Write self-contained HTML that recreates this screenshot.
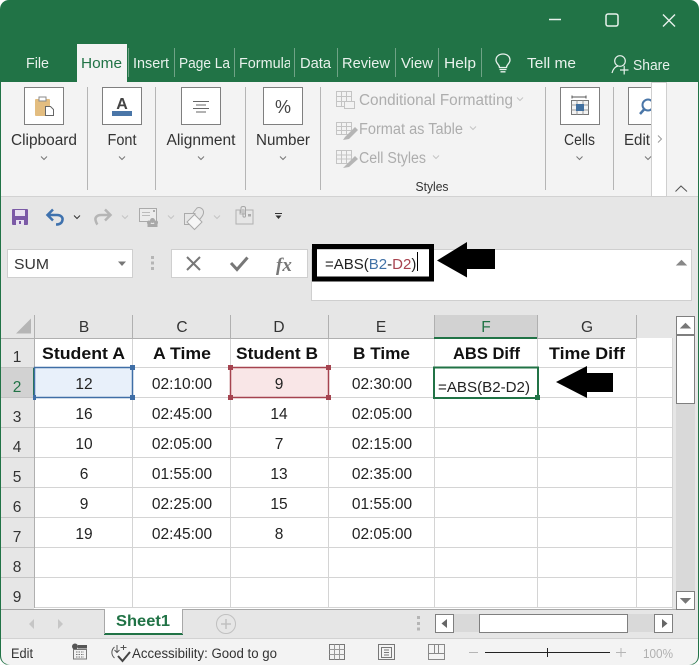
<!DOCTYPE html>
<html><head><meta charset="utf-8"><style>
html,body{margin:0;padding:0;background:#fff;width:700px;height:665px;overflow:hidden}
svg{display:block}
text{font-family:"Liberation Sans",sans-serif;fill:#222}
.t{fill:#e8f1ec;font-size:15px}
.l{font-size:15.5px;fill:#333;text-anchor:middle}
.g{font-size:15.5px;fill:#adadad}
.h{font-size:15.5px;fill:#333;text-anchor:middle}
.b{font-size:16.5px;font-weight:bold;fill:#111;text-anchor:middle}
.c{font-size:15.5px;fill:#222;text-anchor:middle}
.r{font-size:15.5px;fill:#333;text-anchor:middle}
.gl{stroke:#d4d4d4;stroke-width:1;fill:none}
.ln{stroke:#b0b0b0;stroke-width:1;fill:none}
.box{fill:#fff;stroke:#7f7f7f;stroke-width:1}
.car{fill:none;stroke:#777;stroke-width:1}
.gi{fill:none;stroke:#c4c4c4;stroke-width:1}
</style></head><body>
<svg width="700" height="665" viewBox="0 0 700 665" xmlns="http://www.w3.org/2000/svg">
<rect width="700" height="665" fill="#fff"/>
<rect x="0" y="0" width="699" height="665" rx="9" fill="#217346"/>
<rect x="699" y="0" width="1" height="665" fill="#fff"/>

<!-- window controls -->
<path d="M549 19.500H561" stroke="#e8f1ec" stroke-width="1.500"/>
<rect x="606" y="14" width="12" height="12" rx="2" fill="none" stroke="#e8f1ec" stroke-width="1.500"/>
<path d="M663 14.500L675 26.500M675 14.500L663 26.500" stroke="#e8f1ec" stroke-width="1.400"/>

<!-- tabs -->
<rect x="77" y="44" width="50" height="38" fill="#f3f3f3"/>
<text class="t" x="26" y="68" textLength="23" lengthAdjust="spacingAndGlyphs">File</text>
<text x="81" y="68" font-size="15" style="fill:#217346" textLength="41" lengthAdjust="spacingAndGlyphs">Home</text>
<text class="t" x="133" y="68" textLength="36" lengthAdjust="spacingAndGlyphs">Insert</text>
<text class="t" x="179" y="68" textLength="51" lengthAdjust="spacingAndGlyphs">Page La</text>
<svg x="239" y="48" width="51" height="30"><text class="t" x="0" y="20" textLength="60" lengthAdjust="spacingAndGlyphs">Formulas</text></svg>
<text class="t" x="300" y="68" textLength="31" lengthAdjust="spacingAndGlyphs">Data</text>
<text class="t" x="342" y="68" textLength="48" lengthAdjust="spacingAndGlyphs">Review</text>
<text class="t" x="401" y="68" textLength="32" lengthAdjust="spacingAndGlyphs">View</text>
<text class="t" x="444" y="68" textLength="32" lengthAdjust="spacingAndGlyphs">Help</text>
<text class="t" x="527" y="68" textLength="49" lengthAdjust="spacingAndGlyphs">Tell me</text>
<text class="t" x="633" y="70" textLength="37" lengthAdjust="spacingAndGlyphs">Share</text>
<path d="M128.500 48V77M174.500 48V77M234.500 48V77M294.500 48V77M337.500 48V77M395.500 48V77M438.500 48V77M481.500 48V77" stroke="#6fa386" stroke-width="1"/>
<!-- bulb -->
<path d="M499.500 67.500C499.500 64.500 496 63.500 496 60C496 56.500 499 54 503 54C507 54 510 56.500 510 60C510 63.500 506.500 64.500 506.500 67.500Z" fill="none" stroke="#e8f1ec" stroke-width="1.300"/>
<path d="M499.500 69.500H506.500M500.500 71.800H505.500" stroke="#e8f1ec" stroke-width="1.300"/>
<!-- share -->
<circle cx="620" cy="61" r="5.300" fill="none" stroke="#e8f1ec" stroke-width="1.200"/>
<path d="M612 73C613 69 615.500 66.500 618 66M620 70H628.500M624.200 65.800V74.500" fill="none" stroke="#e8f1ec" stroke-width="1.200"/>

<!-- ribbon -->
<rect x="1" y="82" width="697" height="114" fill="#f3f3f3"/>
<rect x="1" y="197" width="697" height="441" fill="#e6e6e6"/>
<rect x="1" y="196" width="697" height="1" fill="#d2d2d2"/>
<path d="M87.500 87V190M155.500 87V190M245.500 87V190M320.500 87V190M545.500 87V190M613.500 87V190" stroke="#b5b5b5"/>
<rect class="box" x="24.500" y="87.500" width="39" height="37"/>
<rect class="box" x="102.500" y="87.500" width="39" height="37"/>
<rect class="box" x="181.500" y="87.500" width="39" height="37"/>
<rect class="box" x="263.500" y="87.500" width="39" height="37"/>
<rect class="box" x="560.500" y="87.500" width="39" height="37"/>
<rect class="box" x="628.500" y="87.500" width="39" height="37"/>
<!-- clipboard icon -->
<rect x="35" y="99" width="15" height="17" rx="1" fill="#e3bd80"/>
<rect x="39" y="97" width="7" height="4" fill="#fff" stroke="#8a8a8a"/>
<path d="M45.500 106.500H50.500L53.500 109.500V115.500H45.500Z" fill="#fff" stroke="#666"/>
<!-- Font icon -->
<rect x="112" y="111" width="20" height="5" fill="#4a76a8"/>
<text x="122" y="109" text-anchor="middle" font-size="16" font-weight="bold" style="fill:#444">A</text>
<!-- Align -->
<path d="M193 101.500H209M196 105H206M193 108.500H209M196 112H206" stroke="#666" stroke-width="1"/>
<!-- Percent -->
<text x="283" y="113" text-anchor="middle" font-size="18" style="fill:#444">%</text>
<!-- Cells icon -->
<path d="M572 97H586M572 95.500V98.500M586 95.500V98.500" stroke="#555"/>
<rect x="571.500" y="100.500" width="17" height="14" fill="#f3f3f3" stroke="#777"/>
<path d="M577 100.500V114.500M583 100.500V114.500M571.500 105H588.500M571.500 110H588.500" stroke="#999"/>
<rect x="576" y="104" width="8" height="7" fill="#42709f"/>
<!-- Edit icon -->
<circle cx="648" cy="105" r="5.500" fill="none" stroke="#4a76a8" stroke-width="2"/>
<path d="M644 109.500L640 114" stroke="#4a76a8" stroke-width="2.500"/>
<rect x="652" y="83" width="46" height="113" fill="#f3f3f3"/>
<rect x="651.500" y="82.500" width="15" height="114" fill="#fff" stroke="#cfcfcf"/>
<path d="M658 135.500L661.500 139L658 142.500" class="car" style="stroke:#999"/>
<path d="M675.500 191.500L681 186L687 191.500" class="car" style="stroke:#555"/>

<text class="l" x="44" y="145" textLength="66" lengthAdjust="spacingAndGlyphs">Clipboard</text>
<text class="l" x="122" y="145" textLength="29" lengthAdjust="spacingAndGlyphs">Font</text>
<text class="l" x="201" y="145" textLength="69" lengthAdjust="spacingAndGlyphs">Alignment</text>
<text class="l" x="283" y="145" textLength="54" lengthAdjust="spacingAndGlyphs">Number</text>
<text class="l" x="579.500" y="145" textLength="31" lengthAdjust="spacingAndGlyphs">Cells</text>
<text class="l" x="637" y="145" textLength="26" lengthAdjust="spacingAndGlyphs">Edit</text>
<path class="car" d="M41 156.500L44 159.500L47 156.500M119 156.500L122 159.500L125 156.500M198 156.500L201 159.500L204 156.500M280 156.500L283 159.500L286 156.500M576.500 156.500L579.500 159.500L582.500 156.500M645 156.500L648 159.500L651 156.500"/>

<!-- styles group -->
<text class="g" x="359" y="105" textLength="154" lengthAdjust="spacingAndGlyphs">Conditional Formatting</text>
<text class="g" x="359" y="134" textLength="104" lengthAdjust="spacingAndGlyphs">Format as Table</text>
<text class="g" x="359" y="163" textLength="67" lengthAdjust="spacingAndGlyphs">Cell Styles</text>
<path class="gi" d="M517 97.500L520 100.500L523 97.500M470 126.500L473 129.500L476 126.500M433 155.500L436 158.500L439 155.500"/>
<g class="gi">
<rect x="336.500" y="91.500" width="15" height="15"/><path d="M341.500 91.500V106.500M346.500 91.500V106.500M336.500 96.500H351.500M336.500 101.500H351.500"/>
<rect x="344.500" y="101.500" width="10" height="7" fill="#f3f3f3"/>
<rect x="336.500" y="122.500" width="15" height="12"/><path d="M341.500 122.500V134.500M346.500 122.500V134.500M336.500 126.500H351.500M336.500 130.500H351.500"/>
<rect x="336.500" y="150.500" width="15" height="13"/><path d="M336.500 155H351.500M336.500 159H351.500M341.500 150.500V163.500M346.500 150.500V163.500"/>
</g>
<path d="M345 137L355 127L358 130L349 139L343 140Z" fill="#b5b5b5"/>
<path d="M345 166L355 156L358 159L349 167L343 168Z" fill="#b5b5b5"/>
<text x="432" y="191" text-anchor="middle" font-size="13" textLength="33" lengthAdjust="spacingAndGlyphs" style="fill:#333">Styles</text>

<!-- QAT -->
<rect x="12" y="209" width="16" height="16" rx="1" fill="#7b5aa6"/>
<rect x="15" y="210" width="10" height="6" fill="#e8e2f0"/>
<rect x="16" y="220" width="8" height="5" fill="#e8e2f0"/>
<rect x="19" y="221" width="2" height="3" fill="#7b5aa6"/>
<path d="M53 209.500L47.500 215L53 220.500M48 215H57C61.500 215 63 218 62.500 220C62 223 59.500 224.500 56 224.500" fill="none" stroke="#3f72ae" stroke-width="2.500"/>
<path d="M74 215.500L77 218.500L80 215.500" class="car" style="stroke:#333"/>
<path d="M105 209.500L110.500 215L105 220.500M110 215H101C96.500 215 95 218 95.500 220C96 222 96.500 223.500 97.500 224.500" fill="none" stroke="#b5b5b5" stroke-width="2.500"/>
<path class="gi" d="M122 215.500L125 218.500L128 215.500M168 215.500L171 218.500L174 215.500M214 215.500L217 218.500L220 215.500"/>
<rect x="139.500" y="208.500" width="17" height="13" fill="#ececec" stroke="#aaa"/>
<path d="M142 212.500H150M142 215.500H150" stroke="#bbb"/>
<rect x="153" y="210" width="2" height="2" fill="#aaa"/>
<circle cx="152.500" cy="220.500" r="2.500" fill="#a8a8a8"/><circle cx="149" cy="222.500" r="2" fill="#a8a8a8"/><circle cx="156" cy="222.500" r="2" fill="#a8a8a8"/>
<rect x="147.500" y="224" width="10" height="3" fill="#a8a8a8"/>
<path d="M184.500 213.500H195V224L189.500 224.500H184.500Z" fill="none" stroke="#aaa"/>
<path d="M193 213L197 208C200 206.500 204 209 203.500 213C203 216 201 218 199 220" fill="none" stroke="#aaa"/>
<path d="M194.500 214.500L202 222L194.500 229.500L187 222Z" fill="#f6f6f6" stroke="#aaa"/>
<path d="M236 210H240V214H245V210H253V224H236Z" fill="none" stroke="#b0b0b0"/>
<path d="M241 213V208C241 206 245.500 206 245.500 208V216C245.500 217.500 243 217.500 243 216V209" fill="none" stroke="#a5a5a5"/>
<rect x="248" y="214" width="3" height="2.500" fill="#aaa"/>
<path d="M275 213.500H282" stroke="#333"/><path d="M275.500 215.500H281.500L278.500 219Z" fill="#333"/>

<!-- Formula bar -->
<rect x="7.500" y="249.500" width="125" height="28" fill="#fff" stroke="#cfcfcf"/>
<text x="14" y="269" font-size="15" textLength="35" lengthAdjust="spacingAndGlyphs" style="fill:#333">SUM</text>
<path d="M118 261.500H126L122 266Z" fill="#777"/>
<path d="M151 256H154V259H151ZM151 261.500H154V264.500H151ZM151 267H154V270H151Z" fill="#b5b5b5"/>
<rect x="171.500" y="249.500" width="136" height="28" fill="#fff" stroke="#cfcfcf"/>
<path d="M187 257L200 270M200 257L187 270" stroke="#777" stroke-width="2"/>
<path d="M231 263L237 269.500L247.500 257.500" fill="none" stroke="#777" stroke-width="3"/>
<text x="276" y="271" font-size="19" font-style="italic" font-weight="bold" style="font-family:'Liberation Serif',serif;fill:#777">fx</text>
<rect x="311.500" y="249.500" width="380" height="51" fill="#fff" stroke="#cfcfcf"/>
<rect x="314.500" y="246.500" width="117" height="32.500" fill="none" stroke="#000" stroke-width="5"/>
<text x="325" y="269" font-size="15" style="fill:#222">=ABS(<tspan style="fill:#4272a6">B2</tspan>-<tspan style="fill:#a8434f">D2</tspan>)</text>
<rect x="417" y="252" width="1" height="19" fill="#000"/>
<path d="M437 260.500L467 242V249H495V269H467V277.500Z" fill="#000"/>
<path d="M677 265L681.500 260.500L686 265Z" fill="#888" stroke="#888"/>

<!-- grid -->
<rect x="34" y="338" width="638" height="271" fill="#fff"/>
<rect x="1" y="315" width="671" height="23" fill="#e6e6e6"/>
<rect x="1" y="338" width="33" height="271" fill="#e6e6e6"/>
<rect x="434" y="315" width="103" height="23" fill="#d2d2d2"/>
<rect x="1" y="368" width="33" height="30" fill="#d2d2d2"/>
<path d="M16 333.500L31 318.500V333.500Z" fill="#b5b5b5"/>
<path class="gl" d="M132.500 338V608M230.500 338V608M328.500 338V608M434.500 338V608M537.500 338V608M636.500 338V608M672.500 338V608"/>
<path class="gl" d="M34 367.500H672M34 397.500H672M34 427.500H672M34 457.500H672M34 487.500H672M34 517.500H672M34 547.500H672M34 577.500H672M34 607.500H672"/>
<path class="ln" d="M34.500 315V608M132.500 315V338M230.500 315V338M328.500 315V338M434.500 315V338M537.500 315V338M636.500 315V338"/>
<path class="gl" d="M1 367.500H34M1 397.500H34M1 427.500H34M1 457.500H34M1 487.500H34M1 517.500H34M1 547.500H34M1 577.500H34" style="stroke:#c4c4c4"/>
<path class="ln" d="M1 338.500H434M537 338.500H636"/>
<rect x="434" y="337" width="103" height="2" fill="#217346"/>
<rect x="33" y="368" width="2" height="30" fill="#217346"/>

<text class="h" x="84" y="332">B</text><text class="h" x="182" y="332">C</text><text class="h" x="279" y="332">D</text><text class="h" x="381" y="332">E</text><text class="h" x="486" y="332" style="fill:#217346">F</text><text class="h" x="587" y="332">G</text>
<text class="r" x="17" y="362">1</text><text class="r" x="17" y="392" style="fill:#217346">2</text><text class="r" x="17" y="422">3</text><text class="r" x="17" y="452">4</text><text class="r" x="17" y="482">5</text><text class="r" x="17" y="512">6</text><text class="r" x="17" y="542">7</text><text class="r" x="17" y="572">8</text><text class="r" x="17" y="602">9</text>

<text class="b" x="83.500" y="359" textLength="83" lengthAdjust="spacingAndGlyphs">Student A</text>
<text class="b" x="182" y="359" textLength="58" lengthAdjust="spacingAndGlyphs">A Time</text>
<text class="b" x="277" y="359" textLength="82" lengthAdjust="spacingAndGlyphs">Student B</text>
<text class="b" x="381.500" y="359" textLength="57" lengthAdjust="spacingAndGlyphs">B Time</text>
<text class="b" x="486.500" y="359" textLength="67" lengthAdjust="spacingAndGlyphs">ABS Diff</text>
<text class="b" x="587" y="359" textLength="76" lengthAdjust="spacingAndGlyphs">Time Diff</text>

<!-- selections -->
<rect x="34.500" y="367.500" width="98" height="30" fill="#e8f0fa" stroke="#3f6ea6" stroke-width="1.500"/>
<rect x="230.500" y="367.500" width="98" height="30" fill="#f9e6e7" stroke="#a5434f" stroke-width="1.500"/>
<rect x="130" y="365" width="5" height="5" fill="#3f6ea6"/><rect x="130" y="395" width="5" height="5" fill="#3f6ea6"/><rect x="33" y="395" width="3" height="5" fill="#3f6ea6"/>
<rect x="228" y="365" width="5" height="5" fill="#a5434f"/><rect x="326" y="365" width="5" height="5" fill="#a5434f"/><rect x="228" y="395" width="5" height="5" fill="#a5434f"/><rect x="326" y="395" width="5" height="5" fill="#a5434f"/>
<rect x="434" y="367.500" width="104" height="30.500" fill="#fff" stroke="#217346" stroke-width="2"/>
<rect x="535" y="395" width="5" height="5" fill="#217346"/>

<g class="c">
<text class="c" x="84" y="389">12</text><text class="c" x="182" y="389">02:10:00</text><text class="c" x="279" y="389">9</text><text class="c" x="382" y="389">02:30:00</text>
<text class="c" x="84" y="419">16</text><text class="c" x="182" y="419">02:45:00</text><text class="c" x="279" y="419">14</text><text class="c" x="382" y="419">02:05:00</text>
<text class="c" x="84" y="449">10</text><text class="c" x="182" y="449">02:05:00</text><text class="c" x="279" y="449">7</text><text class="c" x="382" y="449">02:15:00</text>
<text class="c" x="84" y="479">6</text><text class="c" x="182" y="479">01:55:00</text><text class="c" x="279" y="479">13</text><text class="c" x="382" y="479">02:35:00</text>
<text class="c" x="84" y="509">9</text><text class="c" x="182" y="509">02:25:00</text><text class="c" x="279" y="509">15</text><text class="c" x="382" y="509">01:55:00</text>
<text class="c" x="84" y="539">19</text><text class="c" x="182" y="539">02:45:00</text><text class="c" x="279" y="539">8</text><text class="c" x="382" y="539">02:05:00</text>
</g>
<text x="438" y="392" font-size="15" textLength="92" lengthAdjust="spacingAndGlyphs" style="fill:#222">=ABS(B2-D2)</text>
<path d="M556 382L587 366V373H613V392H587V398Z" fill="#000"/>

<!-- vertical scrollbar -->
<rect x="676" y="316" width="19" height="293" fill="#d9d9d9"/>
<rect x="676.500" y="316.500" width="18" height="18" fill="#fff" stroke="#7f7f7f"/>
<path d="M681 328L685.500 323.500L690 328Z" fill="#777" stroke="#777"/>
<rect x="676.500" y="335.500" width="18" height="68" fill="#fff" stroke="#7f7f7f"/>
<rect x="676.500" y="591.500" width="18" height="18" fill="#fff" stroke="#7f7f7f"/>
<path d="M681 598.500H690L685.500 603Z" fill="#777" stroke="#777"/>

<!-- sheet tabs -->
<rect x="1" y="609" width="675" height="1" fill="#a8a8a8"/>
<rect x="104" y="609" width="79" height="26" fill="#fff"/>
<rect x="104" y="633" width="79" height="2" fill="#217346"/>
<path d="M104.500 609V634M182.500 609V634" stroke="#a8a8a8"/>
<text x="143" y="626" text-anchor="middle" font-size="16" font-weight="bold" textLength="54" lengthAdjust="spacingAndGlyphs" style="fill:#217346">Sheet1</text>
<path d="M34 619V629L29 624ZM58 619V629L63 624Z" fill="#c6c6c6"/>
<circle cx="226" cy="624" r="9.500" fill="none" stroke="#c0c0c0" stroke-width="1"/>
<path d="M221 624H231M226 619V629" stroke="#c0c0c0" stroke-width="1.500"/>
<path d="M417 616H420V619H417ZM417 622H420V625H417ZM417 627.500H420V630.500H417Z" fill="#b5b5b5"/>
<rect x="454" y="614" width="200" height="18" fill="#d9d9d9"/>
<rect x="435.500" y="614.500" width="18" height="18" fill="#fff" stroke="#7f7f7f"/>
<path d="M447 619V628L441.500 623.500Z" fill="#666"/>
<rect x="479.500" y="614.500" width="148" height="18" fill="#fff" stroke="#7f7f7f"/>
<rect x="654.500" y="614.500" width="18" height="18" fill="#fff" stroke="#7f7f7f"/>
<path d="M662 619V628L667.500 623.500Z" fill="#666"/>

<!-- status bar -->
<path d="M1 638H698V655Q698 664 689 664.500H10Q1 664 1 655Z" fill="#f3f3f3"/>
<rect x="1" y="638" width="697" height="1" fill="#d2d2d2"/>
<rect x="0" y="664.500" width="700" height="0.500" fill="#f3f3f3"/>
<text x="11" y="658" font-size="13.500" textLength="22" lengthAdjust="spacingAndGlyphs" style="fill:#333">Edit</text>
<circle cx="75" cy="646.500" r="3" fill="#555"/>
<rect x="78" y="645" width="9" height="3.500" fill="#555"/>
<rect x="73.500" y="649.500" width="13" height="9.500" fill="none" stroke="#777"/>
<path d="M76 652H84M76 654.500H84M76 657H84" stroke="#777" stroke-dasharray="1.500 1"/>
<path d="M114.500 647C111 650 111 655 114.500 658M117 645V652M114.500 650L117 652.500L119.500 650M120.500 647.500H126.500M123.500 645V650" fill="none" stroke="#555" stroke-width="1"/>
<path d="M118 656L122.500 661L130 652" fill="none" stroke="#444" stroke-width="2"/>
<text x="132" y="658" font-size="13.500" textLength="145" lengthAdjust="spacingAndGlyphs" style="fill:#333">Accessibility: Good to go</text>
<rect x="329.500" y="644.500" width="15" height="15" fill="none" stroke="#777"/>
<path d="M334.500 644.500V659.500M339.500 644.500V659.500M329.500 649.500H344.500M329.500 654.500H344.500" stroke="#999"/>
<rect x="378.500" y="644.500" width="16" height="15" fill="none" stroke="#777"/>
<rect x="381.500" y="647.500" width="10" height="10" fill="none" stroke="#777"/>
<path d="M384 650H389M384 652.500H389M384 655H389" stroke="#777"/>
<path d="M428.500 644.500V659.500H444.500V644.500ZM428.500 653.500H444.500M434.500 644.500V653.500M438.500 644.500V653.500" fill="none" stroke="#888"/>
<path d="M469 652.500H478M616 652.500H626M621 648V657" stroke="#b5b5b5"/>
<path d="M485 652.500H610" stroke="#222"/>
<path d="M547.500 648V657" stroke="#222"/>
<text x="643" y="658" font-size="13" textLength="30" lengthAdjust="spacingAndGlyphs" style="fill:#b0b0b0">100%</text>
</svg>
</body></html>
